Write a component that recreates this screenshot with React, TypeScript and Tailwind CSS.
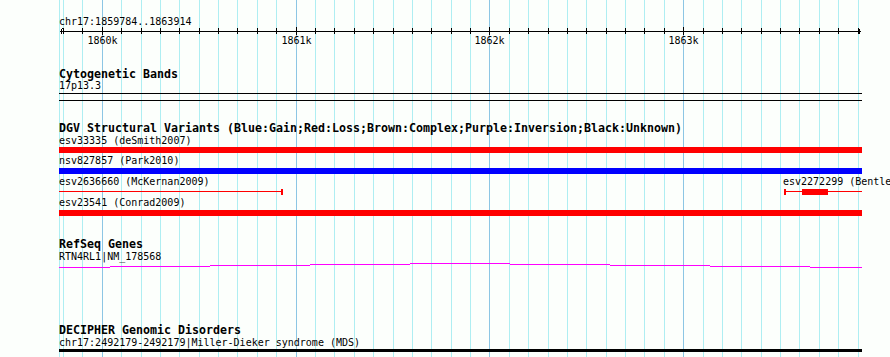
import React from "react";

const px = (bp: number) => Math.round(101.8 + (bp - 1860000) * 0.1938);

const minor: number[] = [];
for (let bp = 1859800; bp <= 1863900; bp += 100) minor.push(bp);
const majors = [1860000, 1861000, 1862000, 1863000];

function Grid() {
  return (
    <div className="absolute inset-0 pointer-events-none">
      <div className="absolute top-0 bottom-0 w-px bg-[#aeeef2]" style={{ left: 59 }} />
      {minor.map((bp) => (
        <div
          key={bp}
          className={
            bp % 1000 === 0
              ? "absolute top-0 bottom-0 w-px bg-[#8cc6e4]"
              : "absolute top-0 bottom-0 w-px bg-[#aeeef2]"
          }
          style={{ left: px(bp) }}
        />
      ))}
    </div>
  );
}

function Ruler() {
  return (
    <div className="relative h-[19px]">
      <svg className="absolute left-0 top-0" width={890} height={10} shapeRendering="crispEdges">
        <line x1={60} y1={4.5} x2={861} y2={4.5} stroke="black" strokeWidth={1} />
        {minor.map((bp) => {
          const x = px(bp) + 0.5;
          const major = bp % 1000 === 0;
          return (
            <line key={bp} x1={x} x2={x} y1={major ? 0 : 1} y2={major ? 8 : 7} stroke="black" strokeWidth={1} />
          );
        })}
        <polyline points="62.5,1.5 60.5,4.5 62.5,7.5" fill="none" stroke="black" strokeWidth={1} />
        <polyline points="858.5,1.5 860.5,4.5 858.5,7.5" fill="none" stroke="black" strokeWidth={1} />
      </svg>
      {majors.map((bp) => (
        <span
          key={bp}
          className="absolute top-[9px] -translate-x-1/2 text-[10px] leading-[10px] text-black whitespace-nowrap"
          style={{ left: px(bp) + 0.5 }}
        >
          {bp / 1000}k
        </span>
      ))}
    </div>
  );
}

function Label({ children, className = "" }: { children: React.ReactNode; className?: string }) {
  return (
    <div className={"h-[10px] text-[10px] leading-[10px] pl-[59px] whitespace-nowrap text-black " + className}>
      {children}
    </div>
  );
}

function Title({ children, className = "" }: { children: React.ReactNode; className?: string }) {
  return (
    <div className={"h-[12px] text-[11.63px] leading-[12px] font-bold pl-[59px] whitespace-nowrap text-black " + className}>
      {children}
    </div>
  );
}

const geneSegs: [number, number, number][] = [
  [59, 110, 5],
  [110, 210, 4],
  [210, 310, 3],
  [310, 410, 2],
  [410, 510, 1],
  [510, 610, 2],
  [610, 710, 3],
  [710, 810, 4],
  [810, 862, 5],
];

export default function App() {
  return (
    <div className="relative w-[890px] h-[357px] overflow-hidden bg-[#fcfffc] font-['DejaVu_Sans_Mono',monospace]">
      <Grid />
      <div className="relative flex flex-col">
        <Label className="mt-[17px]">chr17:1859784..1863914</Label>
        <Ruler />

        <Title className="mt-[22px]">Cytogenetic Bands</Title>
        <Label className="mt-[1px]">17p13.3</Label>
        <div className="mt-[2px] ml-[59px] w-[803px] h-[8px] border-y border-black" />

        <Title className="mt-[21px]">
          DGV Structural Variants (Blue:Gain;Red:Loss;Brown:Complex;Purple:Inversion;Black:Unknown)
        </Title>
        <Label className="mt-[2px]">esv33335 (deSmith2007)</Label>
        <div className="mt-[1px] ml-[59px] w-[803px] h-[6px] bg-[#ff0000]" />
        <Label className="mt-[3px]">nsv827857 (Park2010)</Label>
        <div className="mt-[2px] ml-[59px] w-[803px] h-[6px] bg-[#0000ff]" />
        <div className="relative mt-[3px] h-[10px]">
          <Label>esv2636660 (McKernan2009)</Label>
          <span className="absolute left-[783px] top-0 text-[10px] leading-[10px] whitespace-nowrap text-black">
            esv2272299 (Bentley2008)
          </span>
        </div>
        <div className="relative mt-[2px] h-[6px]">
          <div className="absolute left-[59px] top-[2px] w-[224px] h-px bg-[#ff0000]" />
          <div className="absolute left-[281px] top-0 w-[2px] h-[6px] bg-[#ff0000]" />
          <div className="absolute left-[784px] top-0 w-[2px] h-[6px] bg-[#ff0000]" />
          <div className="absolute left-[784px] top-[2px] w-[78px] h-px bg-[#ff0000]" />
          <div className="absolute left-[802px] top-0 w-[26px] h-[6px] bg-[#ff0000]" />
        </div>
        <Label className="mt-[3px]">esv23541 (Conrad2009)</Label>
        <div className="mt-[2px] ml-[59px] w-[803px] h-[6px] bg-[#ff0000]" />

        <Title className="mt-[22px]">RefSeq Genes</Title>
        <Label className="mt-[2px]">RTN4RL1|NM_178568</Label>
        <svg className="block" width={890} height={6} shapeRendering="crispEdges">
          {geneSegs.map(([a, b, y]) => (
            <line key={a} x1={a} x2={b} y1={y + 0.5} y2={y + 0.5} stroke="#ff00ff" strokeWidth={1} />
          ))}
        </svg>

        <Title className="mt-[56px]">DECIPHER Genomic Disorders</Title>
        <Label className="mt-[2px]">chr17:2492179-2492179|Miller-Dieker syndrome (MDS)</Label>
        <div className="mt-[1px] ml-[59px] w-[803px] h-[3px] bg-black" />
      </div>
    </div>
  );
}
